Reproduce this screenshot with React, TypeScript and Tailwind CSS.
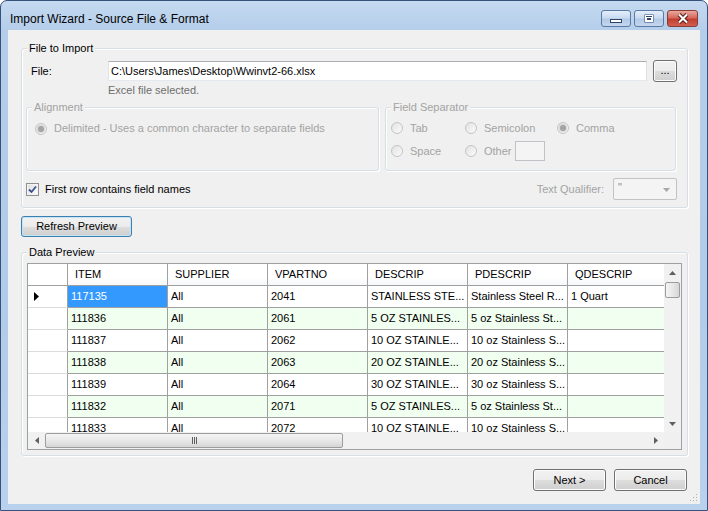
import React from "react"
import clsx from "clsx"

const COLUMNS = [
  { name: "ITEM", w: "w-[100px]" },
  { name: "SUPPLIER", w: "w-[100px]" },
  { name: "VPARTNO", w: "w-[100px]" },
  { name: "DESCRIP", w: "w-[100px]" },
  { name: "PDESCRIP", w: "w-[100px]" },
  { name: "QDESCRIP", w: "w-[100px]" },
]

const ROWS = [
  ["117135", "All", "2041", "STAINLESS STE...", "Stainless Steel R...", "1 Quart"],
  ["111836", "All", "2061", "5 OZ STAINLES...", "5 oz Stainless St...", ""],
  ["111837", "All", "2062", "10 OZ STAINLE...", "10 oz Stainless S...", ""],
  ["111838", "All", "2063", "20 OZ STAINLE...", "20 oz Stainless S...", ""],
  ["111839", "All", "2064", "30 OZ STAINLE...", "30 oz Stainless S...", ""],
  ["111832", "All", "2071", "5 OZ STAINLES...", "5 oz Stainless St...", ""],
  ["111833", "All", "2072", "10 OZ STAINLE...", "10 oz Stainless S...", ""],
]

const DISABLED = "text-[#a3a3a3]"

function GroupBox({
  label,
  disabled,
  className,
  children,
}: {
  label: string
  disabled?: boolean
  className?: string
  children?: React.ReactNode
}) {
  return (
    <div
      className={clsx(
        "relative shrink-0 rounded-[3px] border border-[#d5dfe5] shadow-[inset_1px_1px_0_#ffffff,1px_1px_0_#ffffff]",
        className
      )}
    >
      <span
        className={clsx(
          "absolute -top-[7px] left-[5px] bg-[#f0f0f0] px-[2px] leading-[13px]",
          disabled ? DISABLED : "text-black"
        )}
      >
        {label}
      </span>
      {children}
    </div>
  )
}

function Radio({ checked = false }: { checked?: boolean }) {
  return (
    <span className="flex h-[12px] w-[12px] shrink-0 items-center justify-center rounded-full border border-[#c4c4c4] bg-gradient-to-br from-[#e2e2e2] to-[#fbfbfb]">
      {checked && (
        <span className="h-[6px] w-[6px] rounded-full bg-[#a4a4a4] shadow-[0_0_0_1px_#d6d6d6]" />
      )}
    </span>
  )
}

function WinButton({
  children,
  className,
  focused,
}: {
  children: React.ReactNode
  className?: string
  focused?: boolean
}) {
  return (
    <div
      className={clsx(
        "flex shrink-0 items-center justify-center rounded-[3px] border bg-[linear-gradient(#f2f2f2,#ebebeb_50%,#dddddd_50%,#cfcfcf)] text-black",
        focused
          ? "border-[#3c7fb1] shadow-[inset_0_0_0_1px_#c4e5f6]"
          : "border-[#707070] shadow-[inset_0_0_0_1px_#fcfcfc]",
        className
      )}
    >
      {children}
    </div>
  )
}

function CaptionButton({ kind }: { kind: "min" | "max" | "close" }) {
  const close = kind === "close"
  return (
    <div
      className={clsx(
        "flex h-[17px] items-center justify-center rounded-[3px] border",
        close
          ? "w-[31px] border-[#8a3b33] bg-[linear-gradient(#e9a99f,#d7695c_45%,#c23f31_55%,#d25f4f)]"
          : "w-[30px] border-[#5b7aa3] bg-[linear-gradient(#e4eefa,#c9daf0_45%,#b2c9e6_55%,#c3d6ee)]"
      )}
    >
      <svg width="14" height="11" viewBox="0 0 14 11">
        {kind === "min" && (
          <rect x="1.5" y="6.5" width="11" height="3" fill="#fff" stroke="#2f4566" />
        )}
        {kind === "max" && (
          <>
            <rect x="2.5" y="1.5" width="9" height="8" fill="#2f4566" />
            <rect x="3.5" y="2.5" width="7" height="6" fill="none" stroke="#fff" strokeWidth="1" />
            <rect x="4.5" y="4.5" width="5" height="3" fill="none" stroke="#fff" strokeWidth="1" />
          </>
        )}
        {close && (
          <>
            <path d="M3 1.5 L11 9.5 M11 1.5 L3 9.5" stroke="#5a1f19" strokeWidth="4" />
            <path d="M3 1.5 L11 9.5 M11 1.5 L3 9.5" stroke="#fff" strokeWidth="2" />
          </>
        )}
      </svg>
    </div>
  )
}

function Arrow({ dir }: { dir: "up" | "down" | "left" | "right" }) {
  const paths = {
    up: "M0 4 L3.5 0 L7 4 Z",
    down: "M0 0 L3.5 4 L7 0 Z",
    left: "M4 0 L0 3.5 L4 7 Z",
    right: "M0 0 L4 3.5 L0 7 Z",
  }
  const vertical = dir === "up" || dir === "down"
  return (
    <svg width={vertical ? 7 : 4} height={vertical ? 4 : 7} viewBox={vertical ? "0 0 7 4" : "0 0 4 7"}>
      <path d={paths[dir]} fill="#5f5f5f" />
    </svg>
  )
}

function DataGrid() {
  return (
    <div className="ml-[5px] mt-[10px] flex h-[187px] w-[655px] flex-col border border-[#a0a0a0] bg-white">
      <div className="flex h-[168px]">
        <div className="w-[636px] overflow-hidden">
          {/* header */}
          <div className="flex h-[22px]">
            <div className="h-[22px] w-[40px] shrink-0 border-b border-r border-[#a0a0a0] bg-white" />
            {COLUMNS.map((c) => (
              <div
                key={c.name}
                className={clsx(
                  "flex h-[22px] shrink-0 items-center border-b border-r border-[#a0a0a0] bg-[linear-gradient(#ffffff,#ffffff_60%,#f7f8fa)] pl-[7px]",
                  c.w
                )}
              >
                {c.name}
              </div>
            ))}
          </div>
          {ROWS.map((row, i) => (
            <div key={i} className={clsx("flex h-[22px]", i % 2 === 1 ? "bg-[#f0fff0]" : "bg-white")}>
              <div className="flex h-[22px] w-[40px] shrink-0 items-center border-b border-r border-b-[#dcdcdc] border-r-[#a0a0a0] bg-white pl-[6px]">
                {i === 0 && (
                  <svg width="5" height="9" viewBox="0 0 5 9">
                    <path d="M0 0 L5 4.5 L0 9 Z" fill="#000" />
                  </svg>
                )}
              </div>
              {row.map((cell, j) => (
                <div
                  key={j}
                  className={clsx(
                    "flex h-[22px] shrink-0 items-center whitespace-nowrap border-b border-r border-[#a0a0a0] pl-[3px]",
                    COLUMNS[j].w,
                    i === 0 && j === 0 ? "bg-[#3399ff] text-white" : "text-black"
                  )}
                >
                  {cell}
                </div>
              ))}
            </div>
          ))}
        </div>
        {/* vertical scrollbar */}
        <div className="flex w-[17px] flex-col bg-[#f1f1f1]">
          <div className="flex h-[17px] items-center justify-center">
            <Arrow dir="up" />
          </div>
          <div className="mx-[1px] mt-[1px] h-[16px] w-[15px] rounded-[2px] border border-[#9c9c9c] bg-[linear-gradient(90deg,#f4f4f4,#e8e8e8_50%,#d6d6d6)]" />
          <div className="flex-1" />
          <div className="flex h-[17px] items-center justify-center">
            <Arrow dir="down" />
          </div>
        </div>
      </div>
      {/* horizontal scrollbar */}
      <div className="flex h-[17px] bg-[#f1f1f1]">
        <div className="flex w-[636px] items-center">
          <div className="flex h-[17px] w-[17px] items-center justify-center">
            <Arrow dir="left" />
          </div>
          <div className="flex h-[15px] w-[298px] items-center justify-center rounded-[2px] border border-[#9c9c9c] bg-[linear-gradient(#f4f4f4,#e8e8e8_50%,#d6d6d6)]">
            <div className="flex gap-[1px]">
              <span className="h-[7px] w-[1px] bg-[#606060]" />
              <span className="h-[7px] w-[1px] bg-[#606060]" />
              <span className="h-[7px] w-[1px] bg-[#606060]" />
            </div>
          </div>
          <div className="flex-1" />
          <div className="flex h-[17px] w-[17px] items-center justify-center">
            <Arrow dir="right" />
          </div>
        </div>
        <div className="w-[17px] bg-[#f0f0f0]" />
      </div>
    </div>
  )
}

export default function App() {
  return (
    <div className="h-[511px] w-[708px] bg-white font-['Liberation_Sans',Arial,sans-serif] text-[11px] leading-[13px] text-black">
      <div className="flex h-[511px] w-[708px] flex-col rounded-t-[7px] border border-[#34527a] bg-[linear-gradient(#c5daf1,#b4cdea_30px,#b1cbea_60%,#b9d1ec)]">
        {/* title bar */}
        <div className="flex h-[29px] shrink-0 items-start">
          <span className="ml-[9px] mt-[11px] text-[12px] leading-[15px] text-black">
            Import Wizard - Source File &amp; Format
          </span>
          <div className="ml-auto mr-[9px] mt-[9px] flex gap-[3px]">
            <CaptionButton kind="min" />
            <CaptionButton kind="max" />
            <CaptionButton kind="close" />
          </div>
        </div>

        {/* client area */}
        <div className="relative mx-[7px] mb-[6px] flex flex-1 flex-col bg-[#f0f0f0] pl-[13px]">
          <GroupBox label="File to Import" className="mt-[18px] flex h-[160px] w-[667px] flex-col">
            <div className="ml-[9px] mt-[11px] flex h-[22px] items-center">
              <span className="w-[77px]">File:</span>
              <div className="flex h-[20px] w-[539px] items-center border border-[#abadb3] border-b-[#e3e9ef] border-l-[#e2e3ea] border-r-[#dbdfe6] bg-white pl-[2px]">
                C:\Users\James\Desktop\Wwinvt2-66.xlsx
              </div>
              <WinButton className="ml-[6px] h-[22px] w-[24px] items-end pb-[4px]">...</WinButton>
            </div>
            <span className="ml-[86px] mt-[2px] text-[#6d6d6d]">Excel file selected.</span>

            <div className="ml-[4px] mt-[10px] flex gap-[6px]">
              <GroupBox label="Alignment" disabled className="h-[64px] w-[353px]">
                <div className={clsx("ml-[8px] mt-[14px] flex items-center gap-[7px]", DISABLED)}>
                  <Radio checked />
                  <span>Delimited - Uses a common character to separate fields</span>
                </div>
              </GroupBox>
              <GroupBox label="Field Separator" disabled className="h-[64px] w-[291px]">
                <div className={clsx("ml-[5px] mt-[10px] flex flex-col gap-[3px]", DISABLED)}>
                  <div className="flex h-[20px] items-center">
                    <div className="flex w-[74px] items-center gap-[7px]">
                      <Radio />
                      <span>Tab</span>
                    </div>
                    <div className="flex w-[92px] items-center gap-[7px]">
                      <Radio />
                      <span>Semicolon</span>
                    </div>
                    <div className="flex items-center gap-[7px]">
                      <Radio checked />
                      <span>Comma</span>
                    </div>
                  </div>
                  <div className="flex h-[20px] items-center">
                    <div className="flex w-[74px] items-center gap-[7px]">
                      <Radio />
                      <span>Space</span>
                    </div>
                    <div className="flex items-center gap-[7px]">
                      <Radio />
                      <span className="w-[31px]">Other</span>
                    </div>
                    <div className="h-[20px] w-[30px] border border-[#bfc3c8] bg-[#f4f4f4]" />
                  </div>
                </div>
              </GroupBox>
            </div>

            <div className="ml-[4px] mr-[10px] mt-[7px] flex h-[22px] items-center">
              <span className="flex h-[13px] w-[13px] items-center justify-center border border-[#8e8f8f] bg-[linear-gradient(135deg,#dcdcdc,#ffffff)] shadow-[inset_0_0_0_1px_#f4f4f4]">
                <svg width="9" height="9" viewBox="0 0 9 9">
                  <path d="M1 4.5 L3.5 7 L8 1.5" fill="none" stroke="#3b4f8c" strokeWidth="1.8" />
                </svg>
              </span>
              <span className="ml-[6px]">First row contains field names</span>
              <span className={clsx("ml-auto", DISABLED)}>Text Qualifier:</span>
              <div className="ml-[9px] flex h-[22px] w-[64px] items-start justify-between rounded-[2px] border border-[#c3c3c3] bg-[#f4f4f4] pl-[4px] pr-[6px] pt-[2px] text-[#8a8a8a]">
                <span>"</span>
                <svg width="7" height="4" viewBox="0 0 7 4" className="mt-[7px]">
                  <path d="M0 0 L3.5 4 L7 0 Z" fill="#a8a8a8" />
                </svg>
              </div>
            </div>
          </GroupBox>

          <WinButton focused className="mt-[8px] h-[21px] w-[111px]">
            Refresh Preview
          </WinButton>

          <GroupBox label="Data Preview" className="mt-[15px] flex h-[204px] w-[667px] flex-col">
            <DataGrid />
          </GroupBox>

          <div className="mt-[13px] flex w-[666px] justify-end gap-[8px]">
            <WinButton className="h-[22px] w-[73px]">Next &gt;</WinButton>
            <WinButton className="h-[22px] w-[73px]">Cancel</WinButton>
          </div>

          {/* size grip */}
          <svg width="10" height="10" viewBox="0 0 10 10" className="absolute bottom-[2px] right-[2px]">
            <rect x="8" y="2" width="1" height="1" fill="#b0b0b0" />
            <rect x="5" y="5" width="1" height="1" fill="#b0b0b0" />
            <rect x="8" y="5" width="1" height="1" fill="#b0b0b0" />
            <rect x="2" y="8" width="1" height="1" fill="#b0b0b0" />
            <rect x="5" y="8" width="1" height="1" fill="#b0b0b0" />
            <rect x="8" y="8" width="1" height="1" fill="#b0b0b0" />
          </svg>
        </div>
      </div>
    </div>
  )
}
